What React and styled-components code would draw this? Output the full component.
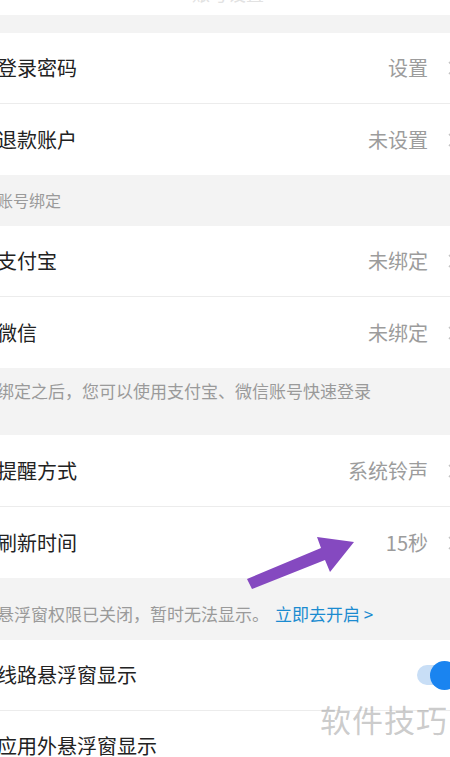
import React from "react";
import styled, { createGlobalStyle } from "styled-components";

// Css
const Global = createGlobalStyle`
  html, body {
    margin: 0;
    padding: 0;
    background: #ffffff;
    overflow: hidden;
  }
  body {
    font-family: "Noto Sans CJK SC", "Noto Sans", sans-serif;
  }
`;

const Page = styled.div`
  position: relative;
  width: 450px;
  height: 757px;
  overflow: hidden;
  background: #ffffff;
`;

const Sheet = styled.div`
  margin-left: -3px;
  width: 462px;
  display: flex;
  flex-direction: column;
`;

const TopBar = styled.div`
  height: 15px;
  overflow: hidden;
  display: flex;
  justify-content: center;
  background: #ffffff;
`;

const TopTitle = styled.span`
  margin-top: -18px;
  font-size: 18px;
  line-height: 22px;
  color: #e2e2e2;
`;

const Gap = styled.div`
  height: ${(p) => p.h}px;
  background: #f3f3f3;
`;

const Section = styled.div`
  height: ${(p) => p.h}px;
  background: #f3f3f3;
  box-sizing: border-box;
  padding-top: ${(p) => p.top}px;
  font-size: ${(p) => p.size || 17}px;
  line-height: 20px;
  color: #9a9a9a;
  white-space: nowrap;
`;

const Link = styled.span`
  margin-left: 6px;
  color: #1b8bd0;
`;

const Row = styled.div`
  height: ${(p) => p.h || 71}px;
  box-sizing: border-box;
  display: flex;
  align-items: ${(p) => (p.top ? "flex-start" : "center")};
  padding-top: ${(p) => p.top || 0}px;
  background: #ffffff;
  border-bottom: ${(p) => (p.line ? "1px solid #ececec" : "none")};
`;

const Label = styled.span`
  flex: 1;
  font-size: 20px;
  line-height: 24px;
  color: #222222;
  white-space: nowrap;
`;

const Value = styled.span`
  font-size: 20px;
  line-height: 24px;
  color: #9c9c9c;
  margin-right: 19px;
`;

const Chevron = styled.svg`
  width: 10px;
  height: 16px;
  margin-right: 2px;
`;

const Track = styled.div`
  width: 40px;
  height: 20px;
  border-radius: 10px;
  background: #c8def6;
  margin-right: -12px;
  display: flex;
  align-items: center;
  justify-content: flex-end;
`;

const Knob = styled.div`
  width: 29px;
  height: 29px;
  border-radius: 50%;
  background: #1a84f0;
  margin-right: -2px;
`;

const Spacer = styled.span`
  width: 14px;
`;

const Watermark = styled.div`
  position: absolute;
  left: 320px;
  top: 699px;
  font-size: 31px;
  line-height: 40px;
  letter-spacing: 1px;
  color: rgba(160, 160, 160, 0.55);
  white-space: nowrap;
`;

const Arrow = styled.svg`
  position: absolute;
  left: 0;
  top: 0;
  width: 450px;
  height: 757px;
  pointer-events: none;
`;
// End Css

const More = () => (
  <Chevron viewBox="0 0 10 16">
    <path d="M2 2 L8 8 L2 14" fill="none" stroke="#c4c4c4" strokeWidth="1.6" />
  </Chevron>
);

const Item = ({ label, value, line, h }) => (
  <Row line={line} h={h}>
    <Label>{label}</Label>
    <Value>{value}</Value>
    <More />
  </Row>
);

const App = () => {
  return (
    <Page>
      <Global />
      <Sheet>
        <TopBar>
          <TopTitle>账号设置</TopTitle>
        </TopBar>
        <Gap h={18} />
        <Item label="登录密码" value="设置" line h={71} />
        <Item label="退款账户" value="未设置" h={71} />
        <Section h={51} top={15} size={16}>账号绑定</Section>
        <Item label="支付宝" value="未绑定" line h={71} />
        <Item label="微信" value="未绑定" h={71} />
        <Section h={67} top={13}>绑定之后，您可以使用支付宝、微信账号快速登录</Section>
        <Item label="提醒方式" value="系统铃声" line h={72} />
        <Item label="刷新时间" value="15秒" h={71} />
        <Section h={62} top={26}>
          悬浮窗权限已关闭，暂时无法显示。
          <Link>立即去开启 &gt;</Link>
        </Section>
        <Row line h={71}>
          <Label>线路悬浮窗显示</Label>
          <Track>
            <Knob />
          </Track>
          <Spacer />
        </Row>
        <Row h={60} top={23}>
          <Label>应用外悬浮窗显示</Label>
        </Row>
      </Sheet>
      <Watermark>软件技巧</Watermark>
      <Arrow viewBox="0 0 450 757">
        <polygon
          points="247,579 321,548 317,537 354,542 330,572 325,560 252,589"
          fill="#8549c0"
        />
      </Arrow>
    </Page>
  );
};

export default App;
